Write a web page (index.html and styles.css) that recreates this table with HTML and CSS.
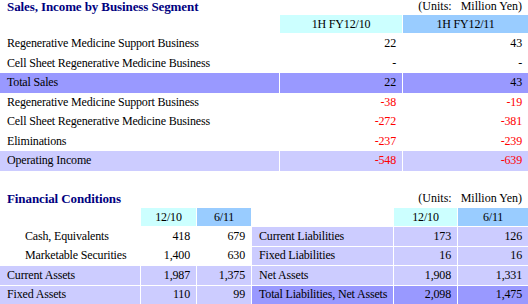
FILE: index.html
```html
<!DOCTYPE html>
<html>
<head>
<meta charset="utf-8">
<link rel="stylesheet" href="styles.css">
</head>
<body>
<section class="sec sales">
  <div class="head">
    <h2 class="title">Sales, Income by Business Segment</h2>
    <span class="units">(Units:&nbsp;&nbsp; Million Yen)</span>
  </div>
  <div class="grid top">
    <div class="c blank"></div>
    <div class="c hd cy">1H FY12/10</div>
    <div class="c hd bl">1H FY12/11</div>

    <div class="c lb">Regenerative Medicine Support Business</div>
    <div class="c num">22</div>
    <div class="c num">43</div>

    <div class="c lb">Cell Sheet Regenerative Medicine Business</div>
    <div class="c num">-</div>
    <div class="c num">-</div>

    <div class="c lb dk">Total Sales</div>
    <div class="c num dk">22</div>
    <div class="c num dk">43</div>

    <div class="c lb">Regenerative Medicine Support Business</div>
    <div class="c num neg">-38</div>
    <div class="c num neg">-19</div>

    <div class="c lb">Cell Sheet Regenerative Medicine Business</div>
    <div class="c num neg">-272</div>
    <div class="c num neg">-381</div>

    <div class="c lb">Eliminations</div>
    <div class="c num neg">-237</div>
    <div class="c num neg">-239</div>

    <div class="c lb lt">Operating Income</div>
    <div class="c num neg lt">-548</div>
    <div class="c num neg lt">-639</div>
  </div>
</section>

<section class="sec fin">
  <div class="head">
    <h2 class="title">Financial Conditions</h2>
    <span class="units">(Units:&nbsp;&nbsp; Million Yen)</span>
  </div>
  <div class="pair">
    <div class="grid bleft">
      <div class="c blank"></div>
      <div class="c hd cy">12/10</div>
      <div class="c hd bl">6/11</div>

      <div class="c lb ind">Cash, Equivalents</div>
      <div class="c num">418</div>
      <div class="c num">679</div>

      <div class="c lb ind">Marketable Securities</div>
      <div class="c num">1,400</div>
      <div class="c num">630</div>

      <div class="c lb lt">Current Assets</div>
      <div class="c num lt">1,987</div>
      <div class="c num lt">1,375</div>

      <div class="c lb lt">Fixed Assets</div>
      <div class="c num lt">110</div>
      <div class="c num lt">99</div>
    </div>
    <div class="grid bright">
      <div class="c blank"></div>
      <div class="c hd cy">12/10</div>
      <div class="c hd bl">6/11</div>

      <div class="c lb lt">Current Liabilities</div>
      <div class="c num lt">173</div>
      <div class="c num lt">126</div>

      <div class="c lb lt">Fixed Liabilities</div>
      <div class="c num lt">16</div>
      <div class="c num lt">16</div>

      <div class="c lb lt">Net Assets</div>
      <div class="c num lt">1,908</div>
      <div class="c num lt">1,331</div>

      <div class="c lb dk">Total Liabilities, Net Assets</div>
      <div class="c num dk">2,098</div>
      <div class="c num dk">1,475</div>
    </div>
  </div>
</section>
</body>
</html>
```
FILE: styles.css
```css
html, body {
  margin: 0;
  padding: 0;
  background: #fff;
}
body {
  width: 528px;
  height: 304px;
  overflow: hidden;
  font-family: "Liberation Serif", "Times New Roman", serif;
  font-size: 12px;
  color: #000;
  letter-spacing: -0.17px;
}
.head {
  display: flex;
  justify-content: space-between;
  align-items: flex-start;
  height: 15px;
}
.title {
  margin: 0;
  padding-left: 7px;
  font-size: 13px;
  font-weight: bold;
  color: #000080;
  line-height: 13px;
  letter-spacing: -0.1px;
}
.units {
  padding-right: 6px;
  line-height: 13px;
  letter-spacing: 0;
}
.grid {
  display: grid;
  column-gap: 1px;
}
.top {
  grid-template-columns: 279px 122px 125px;
  grid-template-rows: 19px repeat(7, 19.5px);
  row-gap: 0;
}
.top .hd {
  margin-bottom: 1px;
}
.c {
  display: flex;
  align-items: center;
  white-space: nowrap;
}
.hd {
  justify-content: center;
}
.cy { background: #ccffff; }
.bl { background: #99ccff; }
.dk { background: #9999ff; }
.lt { background: #ccccff; }
.lb { padding-left: 7px; }
.ind { padding-left: 25px; }
.num {
  justify-content: flex-end;
  padding-right: 6px;
}
.neg { color: #ff0000; }
.fin {
  margin-top: 21px;
}
.fin .head {
  height: 16.5px;
}
.pair {
  display: flex;
  column-gap: 1px;
}
.bleft {
  grid-template-columns: 140px 55px 54px;
  grid-template-rows: repeat(5, 18.4px);
  row-gap: 1px;
}
.bright {
  grid-template-columns: 141px 63px 70px;
  grid-template-rows: repeat(5, 18.4px);
  row-gap: 1px;
}
```
